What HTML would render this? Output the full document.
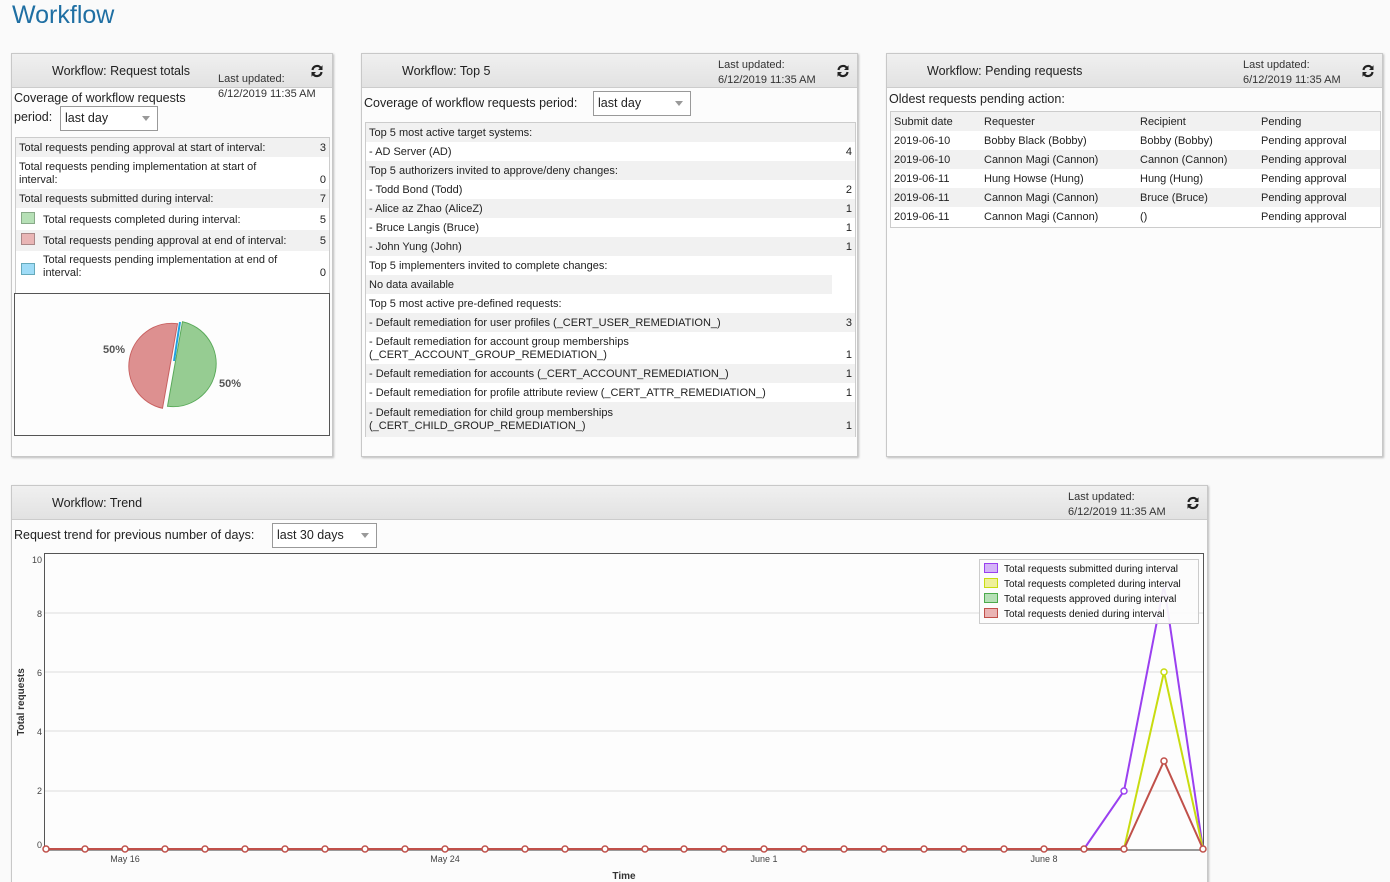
<!DOCTYPE html>
<html><head><meta charset="utf-8">
<style>
*{margin:0;padding:0;box-sizing:border-box}
html,body{width:1390px;height:882px;overflow:hidden}
body{background:#fafafa;font-family:"Liberation Sans",sans-serif;font-size:11px;color:#222;position:relative}
.a{position:absolute;white-space:nowrap}
.panel{position:absolute;background:#fcfcfc;border:1px solid #c8c8c8;box-shadow:1px 1px 2px rgba(0,0,0,.25)}
.hdr{position:absolute;left:0;right:0;top:0;height:34px;background:linear-gradient(#f0f0f0,#e2e2e2);border-bottom:1px solid #ccc}
.ttl{font-size:12.5px;color:#222}
.lu{font-size:11px;color:#333;line-height:15px}
.sel{position:absolute;border:1px solid #999;background:#fff;font-size:12.5px;padding:4px 4px 2px}
.sel:after{content:"";position:absolute;right:7px;top:9px;border-left:4px solid transparent;border-right:4px solid transparent;border-top:5px solid #999}
.box{position:absolute;border:1px solid #ccc;background:#fff}
.r{position:absolute;left:0;right:0}
.g{background:#f1f1f1}
.sw{position:absolute;width:14px;height:12px;border:1px solid #999}
</style></head><body>
<div class="a" style="left:12px;top:1px;font-size:25px;color:#1f6fa3">Workflow</div>

<!-- Panel 1 -->
<div class="panel" style="left:11px;top:53px;width:322px;height:404px">
  <div class="hdr"></div>
  <div class="a ttl" style="left:40px;top:10px">Workflow: Request totals</div>
  <div class="a lu" style="left:206px;top:18px">Last updated:<br>6/12/2019 11:35 AM</div>
  <svg class="a" style="left:298px;top:10px" width="14" height="14" viewBox="0 0 14 14"><path d="M2.5 6A4.6 4.6 0 0 1 11 4.2M11.5 8A4.6 4.6 0 0 1 3 9.8" fill="none" stroke="#222" stroke-width="2.2"/><path d="M12.5 1.2V6H8z M1.5 12.8V8H6z" fill="#222"/></svg>
  <div class="a" style="left:2px;top:37px;font-size:12.5px">Coverage of workflow requests</div>
  <div class="a" style="left:2px;top:56px;font-size:12.5px">period:</div>
  <div class="sel" style="left:48px;top:52px;width:98px;height:25px">last day</div>
  <div class="box" style="left:3px;top:83px;width:315px;height:158px">
    <div class="r g" style="top:0;height:19px"></div>
    <div class="r g" style="top:51px;height:19px"></div>
    <div class="r g" style="top:92px;height:21px"></div>
    <div class="a" style="left:3px;top:4px">Total requests pending approval at start of interval:</div><div class="a" style="right:3px;top:4px">3</div>
    <div class="a" style="left:3px;top:23px;line-height:13px">Total requests pending implementation at start of<br>interval:</div><div class="a" style="right:3px;top:36px">0</div>
    <div class="a" style="left:3px;top:55px">Total requests submitted during interval:</div><div class="a" style="right:3px;top:55px">7</div>
    <div class="sw" style="left:5px;top:74px;background:#b6e0b6;border-color:#8a8"></div><div class="a" style="left:27px;top:76px">Total requests completed during interval:</div><div class="a" style="right:3px;top:76px">5</div>
    <div class="sw" style="left:5px;top:95px;background:#e9b5b5;border-color:#a88"></div><div class="a" style="left:27px;top:97px">Total requests pending approval at end of interval:</div><div class="a" style="right:3px;top:97px">5</div>
    <div class="sw" style="left:5px;top:125px;background:#9fdcf7;border-color:#6ab"></div><div class="a" style="left:27px;top:116px;line-height:13px">Total requests pending implementation at end of<br>interval:</div><div class="a" style="right:3px;top:129px">0</div>
  </div>
  <div class="a" style="left:2px;top:239px;width:316px;height:143px;border:1px solid #555;background:#fdfdfd"></div>
  <svg class="a" style="left:0;top:0" width="322" height="404">
    <path d="M160 311 L167.5 268.7 A43 43 0 0 0 152.5 353.3 Z" transform="translate(-2,1)" fill="#dd9090" stroke="#c86060"/>
    <path d="M160 311 L167.5 268.7 A43 43 0 0 1 152.5 353.3 Z" transform="translate(3,-1)" fill="#96cc92" stroke="#5aaa5a"/>
    <line x1="168" y1="268" x2="162" y2="307" stroke="#1fa0e0" stroke-width="2"/>
    <text x="91" y="299" font-family="Liberation Sans" font-size="11" font-weight="bold" fill="#555">50%</text>
    <text x="207" y="333" font-family="Liberation Sans" font-size="11" font-weight="bold" fill="#555">50%</text>
  </svg>
</div>

<!-- Panel 2 -->
<div class="panel" style="left:361px;top:53px;width:497px;height:404px">
  <div class="hdr"></div>
  <div class="a ttl" style="left:40px;top:10px">Workflow: Top 5</div>
  <div class="a lu" style="left:356px;top:4px">Last updated:<br>6/12/2019 11:35 AM</div>
  <svg class="a" style="left:474px;top:10px" width="14" height="14" viewBox="0 0 14 14"><path d="M2.5 6A4.6 4.6 0 0 1 11 4.2M11.5 8A4.6 4.6 0 0 1 3 9.8" fill="none" stroke="#222" stroke-width="2.2"/><path d="M12.5 1.2V6H8z M1.5 12.8V8H6z" fill="#222"/></svg>
  <div class="a" style="left:2px;top:42px;font-size:12.5px">Coverage of workflow requests period:</div>
  <div class="sel" style="left:231px;top:37px;width:98px;height:25px">last day</div>
  <div class="box" style="left:3px;top:68px;width:491px;height:315px">
    <div class="r g" style="top:0;height:19px"></div><div class="a" style="left:3px;top:4px">Top 5 most active target systems:</div>
    <div class="a" style="left:3px;top:23px">- AD Server (AD)</div><div class="a" style="right:3px;top:23px">4</div>
    <div class="r g" style="top:38px;height:19px"></div><div class="a" style="left:3px;top:42px">Top 5 authorizers invited to approve/deny changes:</div>
    <div class="a" style="left:3px;top:61px">- Todd Bond (Todd)</div><div class="a" style="right:3px;top:61px">2</div>
    <div class="r g" style="top:76px;height:19px"></div><div class="a" style="left:3px;top:80px">- Alice az Zhao (AliceZ)</div><div class="a" style="right:3px;top:80px">1</div>
    <div class="a" style="left:3px;top:99px">- Bruce Langis (Bruce)</div><div class="a" style="right:3px;top:99px">1</div>
    <div class="r g" style="top:114px;height:19px"></div><div class="a" style="left:3px;top:118px">- John Yung (John)</div><div class="a" style="right:3px;top:118px">1</div>
    <div class="a" style="left:3px;top:137px">Top 5 implementers invited to complete changes:</div>
    <div class="a g" style="left:0;top:152px;width:466px;height:19px"></div><div class="a" style="left:3px;top:156px">No data available</div>
    <div class="a" style="left:3px;top:175px">Top 5 most active pre-defined requests:</div>
    <div class="r g" style="top:190px;height:19px"></div><div class="a" style="left:3px;top:194px">- Default remediation for user profiles (_CERT_USER_REMEDIATION_)</div><div class="a" style="right:3px;top:194px">3</div>
    <div class="a" style="left:3px;top:213px;line-height:13px">- Default remediation for account group memberships<br>(_CERT_ACCOUNT_GROUP_REMEDIATION_)</div><div class="a" style="right:3px;top:226px">1</div>
    <div class="r g" style="top:241px;height:19px"></div><div class="a" style="left:3px;top:245px">- Default remediation for accounts (_CERT_ACCOUNT_REMEDIATION_)</div><div class="a" style="right:3px;top:245px">1</div>
    <div class="a" style="left:3px;top:264px">- Default remediation for profile attribute review (_CERT_ATTR_REMEDIATION_)</div><div class="a" style="right:3px;top:264px">1</div>
    <div class="r g" style="top:279px;height:35px"></div><div class="a" style="left:3px;top:284px;line-height:13px">- Default remediation for child group memberships<br>(_CERT_CHILD_GROUP_REMEDIATION_)</div><div class="a" style="right:3px;top:297px">1</div>
  </div>
</div>

<!-- Panel 3 -->
<div class="panel" style="left:886px;top:53px;width:497px;height:404px">
  <div class="hdr"></div>
  <div class="a ttl" style="left:40px;top:10px">Workflow: Pending requests</div>
  <div class="a lu" style="left:356px;top:4px">Last updated:<br>6/12/2019 11:35 AM</div>
  <svg class="a" style="left:474px;top:10px" width="14" height="14" viewBox="0 0 14 14"><path d="M2.5 6A4.6 4.6 0 0 1 11 4.2M11.5 8A4.6 4.6 0 0 1 3 9.8" fill="none" stroke="#222" stroke-width="2.2"/><path d="M12.5 1.2V6H8z M1.5 12.8V8H6z" fill="#222"/></svg>
  <div class="a" style="left:2px;top:38px;font-size:12.5px">Oldest requests pending action:</div>
  <div class="box" style="left:3px;top:57px;width:491px;height:117px">
    <div class="r g" style="top:0;height:19px"></div>
    <div class="r g" style="top:38px;height:19px"></div>
    <div class="r g" style="top:76px;height:19px"></div>
    <div class="a" style="left:3px;top:4px">Submit date</div><div class="a" style="left:93px;top:4px">Requester</div><div class="a" style="left:249px;top:4px">Recipient</div><div class="a" style="left:370px;top:4px">Pending</div>
    <div class="a" style="left:3px;top:23px">2019-06-10</div><div class="a" style="left:93px;top:23px">Bobby Black (Bobby)</div><div class="a" style="left:249px;top:23px">Bobby (Bobby)</div><div class="a" style="left:370px;top:23px">Pending approval</div>
    <div class="a" style="left:3px;top:42px">2019-06-10</div><div class="a" style="left:93px;top:42px">Cannon Magi (Cannon)</div><div class="a" style="left:249px;top:42px">Cannon (Cannon)</div><div class="a" style="left:370px;top:42px">Pending approval</div>
    <div class="a" style="left:3px;top:61px">2019-06-11</div><div class="a" style="left:93px;top:61px">Hung Howse (Hung)</div><div class="a" style="left:249px;top:61px">Hung (Hung)</div><div class="a" style="left:370px;top:61px">Pending approval</div>
    <div class="a" style="left:3px;top:80px">2019-06-11</div><div class="a" style="left:93px;top:80px">Cannon Magi (Cannon)</div><div class="a" style="left:249px;top:80px">Bruce (Bruce)</div><div class="a" style="left:370px;top:80px">Pending approval</div>
    <div class="a" style="left:3px;top:99px">2019-06-11</div><div class="a" style="left:93px;top:99px">Cannon Magi (Cannon)</div><div class="a" style="left:249px;top:99px">()</div><div class="a" style="left:370px;top:99px">Pending approval</div>
  </div>
</div>

<!-- Panel 4 -->
<div class="panel" style="left:11px;top:485px;width:1197px;height:420px">
  <div class="hdr"></div>
  <div class="a ttl" style="left:40px;top:10px">Workflow: Trend</div>
  <div class="a lu" style="left:1056px;top:4px">Last updated:<br>6/12/2019 11:35 AM</div>
  <svg class="a" style="left:1174px;top:10px" width="14" height="14" viewBox="0 0 14 14"><path d="M2.5 6A4.6 4.6 0 0 1 11 4.2M11.5 8A4.6 4.6 0 0 1 3 9.8" fill="none" stroke="#222" stroke-width="2.2"/><path d="M12.5 1.2V6H8z M1.5 12.8V8H6z" fill="#222"/></svg>
  <div class="a" style="left:2px;top:42px;font-size:12.5px">Request trend for previous number of days:</div>
  <div class="sel" style="left:260px;top:37px;width:105px;height:25px">last 30 days</div>
</div>
<svg class="a" style="left:0;top:0" width="1390" height="882" font-family="Liberation Sans">
  <rect x="44.5" y="553.5" width="1159" height="297" fill="#fdfdfd" stroke="#555"/>
  <g stroke="#ddd"><line x1="45" x2="1203" y1="613" y2="613"/><line x1="45" x2="1203" y1="672" y2="672"/><line x1="45" x2="1203" y1="731" y2="731"/><line x1="45" x2="1203" y1="791" y2="791"/></g>
  <line x1="45" x2="1203" y1="850" y2="850" stroke="#999" stroke-width="2"/>
  <g font-size="9" fill="#444" text-anchor="end"><text x="42" y="563">10</text><text x="42" y="617">8</text><text x="42" y="676">6</text><text x="42" y="735">4</text><text x="42" y="794">2</text><text x="42" y="848">0</text></g>
  <g font-size="9" fill="#444" text-anchor="middle"><text x="125" y="862">May 16</text><text x="445" y="862">May 24</text><text x="764" y="862">June 1</text><text x="1044" y="862">June 8</text></g>
  <text x="624" y="879" font-size="10" font-weight="bold" fill="#333" text-anchor="middle">Time</text>
  <text transform="translate(24,702) rotate(-90)" font-size="10" font-weight="bold" fill="#333" text-anchor="middle">Total requests</text>
  <polyline points="1084,849 1124,791 1164,585 1203,849" fill="none" stroke="#9a40f0" stroke-width="2"/>
  <polyline points="1124,849 1164,672 1203,849" fill="none" stroke="#c8dc10" stroke-width="2"/>
  <polyline points="46,849 1124,849 1164,761 1203,849" fill="none" stroke="#c0504a" stroke-width="2"/>
  <g fill="#fff" stroke="#c0504a" stroke-width="1.5">
    <circle cx="46" cy="849" r="3"/><circle cx="85" cy="849" r="3"/><circle cx="125" cy="849" r="3"/><circle cx="165" cy="849" r="3"/><circle cx="205" cy="849" r="3"/><circle cx="245" cy="849" r="3"/><circle cx="285" cy="849" r="3"/><circle cx="325" cy="849" r="3"/><circle cx="365" cy="849" r="3"/><circle cx="405" cy="849" r="3"/><circle cx="445" cy="849" r="3"/><circle cx="485" cy="849" r="3"/><circle cx="525" cy="849" r="3"/><circle cx="565" cy="849" r="3"/><circle cx="605" cy="849" r="3"/><circle cx="645" cy="849" r="3"/><circle cx="684" cy="849" r="3"/><circle cx="724" cy="849" r="3"/><circle cx="764" cy="849" r="3"/><circle cx="804" cy="849" r="3"/><circle cx="844" cy="849" r="3"/><circle cx="884" cy="849" r="3"/><circle cx="924" cy="849" r="3"/><circle cx="964" cy="849" r="3"/><circle cx="1004" cy="849" r="3"/><circle cx="1044" cy="849" r="3"/><circle cx="1084" cy="849" r="3"/><circle cx="1124" cy="849" r="3"/><circle cx="1164" cy="761" r="3"/><circle cx="1203" cy="849" r="3"/>
  </g>
  <circle cx="1124" cy="791" r="3" fill="#fff" stroke="#9a40f0" stroke-width="1.5"/>
  <circle cx="1164" cy="672" r="3" fill="#fff" stroke="#c8dc10" stroke-width="1.5"/>
  <rect x="979.5" y="559.5" width="219" height="64" fill="#fcfcfc" fill-opacity="0.92" stroke="#ccc"/>
  <g stroke-width="1"><rect x="984.5" y="563.5" width="13" height="9" fill="#d4b4f8" stroke="#9a40f0"/><rect x="984.5" y="578.5" width="13" height="9" fill="#eef09a" stroke="#c8dc10"/><rect x="984.5" y="593.5" width="13" height="9" fill="#b6e0b6" stroke="#4caa4c"/><rect x="984.5" y="608.5" width="13" height="9" fill="#eab4b4" stroke="#c0504a"/></g>
  <g font-size="10" fill="#111"><text x="1004" y="572">Total requests submitted during interval</text><text x="1004" y="587">Total requests completed during interval</text><text x="1004" y="602">Total requests approved during interval</text><text x="1004" y="617">Total requests denied during interval</text></g>
</svg>
</body></html>
